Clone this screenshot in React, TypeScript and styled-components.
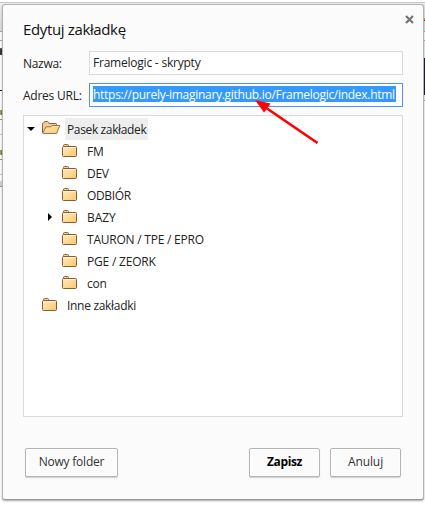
import React from 'react';
import styled, { createGlobalStyle } from 'styled-components';

const Global = createGlobalStyle`
  * { box-sizing: border-box; }
  body { margin: 0; background: #fff; overflow: hidden; }
`;

const Page = styled.div`
  display: grid;
  grid-template-columns: 2px 422px 1px;
  grid-template-rows: 4px 496px 8px;
  width: 425px;
  height: 508px;
  font: 12px/22px "Open Sans", "Noto Sans", sans-serif;
  color: #222;
`;

const TopEdge = styled.div`
  grid-column: 1 / 4;
  grid-row: 1;
  height: 8px;
  margin-top: 2px;
  border-top: 1px solid #c8c8c8;
  background: #efefef;
`;

const Rail = styled.div<{ $col: number }>`
  grid-column: ${p => p.$col};
  grid-row: 2;
  display: flex;
  flex-direction: column;
`;

const Band = styled.i<{ $h: number; $c?: string }>`
  flex: none;
  height: ${p => p.$h}px;
  background: ${p => p.$c ?? 'transparent'};
`;

const Dialog = styled.section`
  grid-column: 2;
  grid-row: 2;
  position: relative;
  display: flex;
  flex-direction: column;
  padding: 14px 19px 0 20px;
  border: 1px solid #b3b3b3;
  border-bottom-color: #999;
  border-radius: 3px;
  background: #fbfbfb;
  box-shadow: 0 1px 2px rgba(0, 0, 0, 0.35);
`;

const Title = styled.h1`
  margin: 0;
  height: 32px;
  font-size: 15px;
  line-height: 20px;
  font-weight: 400;
  color: #111;
`;

const Text = styled.span<{ $track?: number }>`
  letter-spacing: ${p => p.$track ?? 0}px;
  white-space: nowrap;
`;

const Close = styled.button`
  position: absolute;
  top: 10px;
  right: 9px;
  width: 9px;
  height: 9px;
  padding: 0;
  border: 0;
  background: none;
  svg { display: block; }
`;

const Fields = styled.div`
  display: grid;
  gap: 8px;
  padding-bottom: 8px;
`;

const Field = styled.label`
  display: grid;
  grid-template-columns: 66px 314px;
  height: 24px;
  line-height: 25px;
`;

const Input = styled.div<{ $focus?: boolean }>`
  display: flex;
  align-items: flex-start;
  height: 24px;
  padding: 2px 3px;
  border: 1px solid ${p => (p.$focus ? '#4d90fe' : '#d9d9d9')};
  background: #fff;
  line-height: 18px;
`;

const Selected = styled(Text)`
  height: 16px;
  width: 303px;
  line-height: 18px;
  background: #3399ff;
  color: #fff;
`;

const Tree = styled.div`
  width: 380px;
  height: 302px;
  padding-top: 2px;
  border: 1px solid #d9d9d9;
  background: #fff;
`;

const Row = styled.div<{ $depth: number }>`
  display: flex;
  align-items: center;
  height: 22px;
  padding-left: ${p => p.$depth * 20}px;
`;

const Twisty = styled.span`
  width: 17px;
  height: 16px;
  svg { display: block; }
`;

const Icon = styled.svg`
  display: block;
  width: 20px;
  height: 16px;
  margin-right: 4px;
`;

const RowLabel = styled(Text)<{ $active?: boolean }>`
  height: 22px;
  padding: 0 2px;
  line-height: 24px;
  background: ${p => (p.$active ? '#eee' : 'transparent')};
`;

const Actions = styled.footer`
  display: flex;
  gap: 10px;
  padding: 31px 3px 0 2px;
`;

const Button = styled.button<{ $w: number; $primary?: boolean; $first?: boolean }>`
  width: ${p => p.$w}px;
  height: 29px;
  padding: 0 0 1px;
  margin-right: ${p => (p.$first ? 'auto' : '0')};
  border: 1px solid #b5b5b5;
  border-radius: 2px;
  background: #fbfbfb;
  box-shadow: 0 1px 1px rgba(0, 0, 0, 0.18), inset 0 0 0 1px #fff;
  font: inherit;
  font-weight: ${p => (p.$primary ? 700 : 400)};
  color: ${p => (p.$primary ? '#000' : '#333')};
`;

const Arrow = styled.svg`
  position: absolute;
  left: 247px;
  top: 89px;
`;

function Folder({ open }: { open?: boolean }) {
  return (
    <Icon viewBox="0 0 20 16">
      <defs>
        <linearGradient id="folder" x1="0" y1="0" x2="1" y2="1">
          <stop offset="0" stopColor="#ffedc2" />
          <stop offset="1" stopColor="#fac56c" />
        </linearGradient>
      </defs>
      {open ? (
        <>
          <path d="M1.5 12V3Q1.5 2 2.5 2L3 1.5Q3.2 .5 4 .5H6.5Q7.3 .5 7.5 1.5L8 2.5H15Q15.5 2.5 15.5 3.5V6" fill="#f3ce8c" stroke="#8c6239" />
          <path d="M1.7 12.2L5 5.8H10L11 4.5H18.8L15.5 12.5H2.5Z" fill="url(#folder)" stroke="#a0713f" strokeLinejoin="round" />
        </>
      ) : (
        <>
          <path d="M2.5 4V2.5Q2.5 1.5 3.5 1.5H6.5Q7.5 1.5 7.5 2.5V4" fill="#f6d391" stroke="#8f6539" />
          <rect x="1.5" y="3.5" width="14" height="10" rx="1" fill="url(#folder)" stroke="#875d33" />
          <path d="M2.5 5.5V4.5H14" fill="none" stroke="#fff3d5" />
        </>
      )}
    </Icon>
  );
}

type Item = { label: string; depth: number; state?: 'open' | 'closed'; track: number };

const items: Item[] = [
  { label: 'Pasek zakładek', depth: 0, state: 'open', track: -0.36 },
  { label: 'FM', depth: 1, track: -0.3 },
  { label: 'DEV', depth: 1, track: -0.3 },
  { label: 'ODBIÓR', depth: 1, track: -0.35 },
  { label: 'BAZY', depth: 1, state: 'closed', track: -0.1 },
  { label: 'TAURON / TPE / EPRO', depth: 1, track: -0.23 },
  { label: 'PGE / ZEORK', depth: 1, track: -0.2 },
  { label: 'con', depth: 1, track: -0.2 },
  { label: 'Inne zakładki', depth: 0, track: -0.3 },
];

export default function App() {
  return (
    <Page>
      <Global />
      <TopEdge />
      <Rail $col={1}>
        <Band $h={27} $c="linear-gradient(#efefef, #dcdcdc)" />
        <Band $h={1} $c="#aaa" />
        <Band $h={8} />
        <Band $h={1} $c="#aaa" />
        <Band $h={7} />
        <Band $h={1} $c="#3a6ea5" />
        <Band $h={6} $c="#4a3328" />
        <Band $h={35} />
        <Band $h={1} $c="#111" />
        <Band $h={19} />
        <Band $h={5} $c="linear-gradient(90deg, #b5a64a 50%, #3f8a68 50%)" />
        <Band $h={4} />
        <Band $h={1} $c="#9a9460" />
        <Band $h={14} />
        <Band $h={1} $c="#ccc" />
        <Band $h={15} />
        <Band $h={5} $c="linear-gradient(90deg, #b5a64a 50%, #3f8a68 50%)" />
        <Band $h={4} />
        <Band $h={1} $c="#9a9460" />
        <Band $h={14} />
        <Band $h={1} $c="#ccc" />
        <Band $h={6} />
        <Band $h={5} $c="#d6d6d6" />
        <Band $h={1} $c="#999" />
      </Rail>
      <Dialog>
        <Title><Text $track={-0.36}>Edytuj zakładkę</Text></Title>
        <Close aria-label="Zamknij">
          <svg width="9" height="9" viewBox="0 0 9 9"><path d="M1 1L8 8M8 1L1 8" stroke="#777" strokeWidth="2.3" /></svg>
        </Close>
        <Fields>
          <Field>
            <Text $track={-0.3}>Nazwa:</Text>
            <Input><Text $track={-0.22}>Framelogic - skrypty</Text></Input>
          </Field>
          <Field>
            <Text $track={-0.24}>Adres URL:</Text>
            <Input $focus><Selected $track={-0.28}>https://purely-imaginary.github.io/Framelogic/index.html</Selected></Input>
          </Field>
        </Fields>
        <Tree>
          {items.map(it => (
            <Row key={it.label} $depth={it.depth}>
              <Twisty>
                {it.state === 'open' && <svg width="16" height="16"><path d="M3 6H11L7 10Z" fill="#000" /></svg>}
                {it.state === 'closed' && <svg width="16" height="16"><path d="M4 4V12L8 8Z" fill="#000" /></svg>}
              </Twisty>
              <Folder open={it.state === 'open'} />
              <RowLabel $track={it.track} $active={it.state === 'open'}>{it.label}</RowLabel>
            </Row>
          ))}
        </Tree>
        <Actions>
          <Button $w={93} $first><Text $track={-0.22}>Nowy folder</Text></Button>
          <Button $w={71} $primary><Text $track={-0.4}>Zapisz</Text></Button>
          <Button $w={71}><Text $track={-0.1}>Anuluj</Text></Button>
        </Actions>
        <Arrow width="72" height="54" viewBox="0 0 72 54">
          <path d="M67.5 49L17 14.5" stroke="#f00" strokeWidth="2.7" />
          <path d="M5 6L20.5 9.5L17.5 14L14 18.5Z" fill="#f00" />
        </Arrow>
      </Dialog>
      <Rail $col={3}>
        <Band $h={14} $c="#e8e8e8" />
        <Band $h={2} $c="#d99a4a" />
        <Band $h={1} $c="#4a4a90" />
        <Band $h={10} $c="#e0e0e0" />
        <Band $h={1} $c="#aaa" />
        <Band $h={8} />
        <Band $h={1} $c="#aaa" />
        <Band $h={17} $c="#f2f2f2" />
        <Band $h={37} $c="#1b2030" />
        <Band $h={5} $c="#f2f2f2" />
        <Band $h={1} $c="#aaa" />
      </Rail>
    </Page>
  );
}
